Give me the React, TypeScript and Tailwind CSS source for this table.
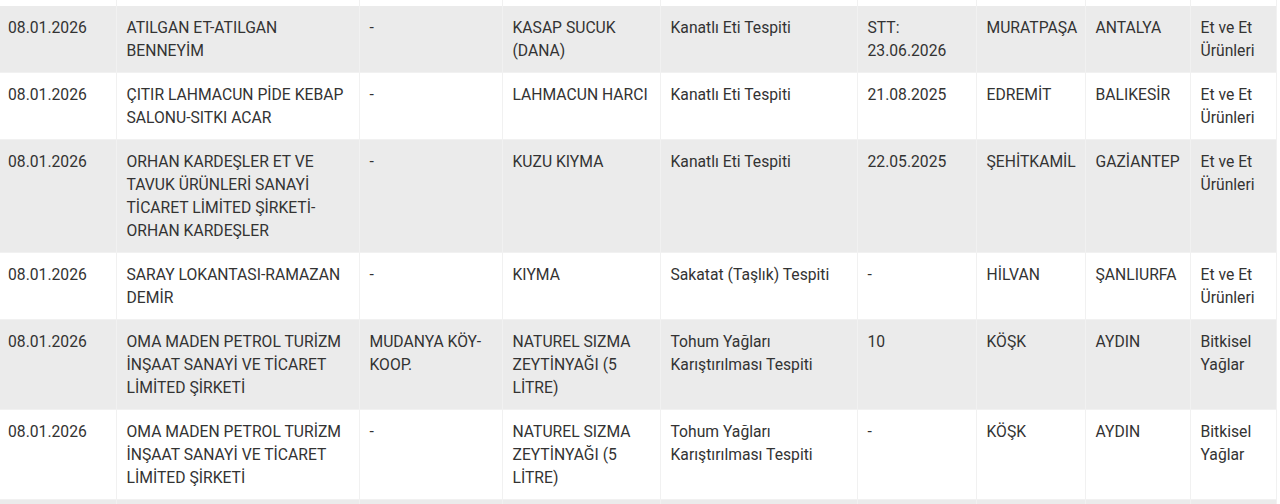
import React from 'react';

// Column widths measured from the reference
const COLS = [116, 243, 143, 158, 197, 119, 109, 105, 86];

type Row = string[];

const ROWS: Row[] = [
    ['08.01.2026', 'ATILGAN ET-ATILGAN BENNEYİM', '-', 'KASAP SUCUK (DANA)', 'Kanatlı Eti Tespiti', 'STT: 23.06.2026', 'MURATPAŞA', 'ANTALYA', 'Et ve Et Ürünleri'],
    ['08.01.2026', 'ÇITIR LAHMACUN PİDE KEBAP SALONU-SITKI ACAR', '-', 'LAHMACUN HARCI', 'Kanatlı Eti Tespiti', '21.08.2025', 'EDREMİT', 'BALIKESİR', 'Et ve Et Ürünleri'],
    ['08.01.2026', 'ORHAN KARDEŞLER ET VE TAVUK ÜRÜNLERİ SANAYİ TİCARET LİMİTED ŞİRKETİ-ORHAN KARDEŞLER', '-', 'KUZU KIYMA', 'Kanatlı Eti Tespiti', '22.05.2025', 'ŞEHİTKAMİL', 'GAZİANTEP', 'Et ve Et Ürünleri'],
    ['08.01.2026', 'SARAY LOKANTASI-RAMAZAN DEMİR', '-', 'KIYMA', 'Sakatat (Taşlık) Tespiti', '-', 'HİLVAN', 'ŞANLIURFA', 'Et ve Et Ürünleri'],
    ['08.01.2026', 'OMA MADEN PETROL TURİZM İNŞAAT SANAYİ VE TİCARET LİMİTED ŞİRKETİ', 'MUDANYA KÖY-KOOP.', 'NATUREL SIZMA ZEYTİNYAĞI (5 LİTRE)', 'Tohum Yağları Karıştırılması Tespiti', '10', 'KÖŞK', 'AYDIN', 'Bitkisel Yağlar'],
    ['08.01.2026', 'OMA MADEN PETROL TURİZM İNŞAAT SANAYİ VE TİCARET LİMİTED ŞİRKETİ', '-', 'NATUREL SIZMA ZEYTİNYAĞI (5 LİTRE)', 'Tohum Yağları Karıştırılması Tespiti', '-', 'KÖŞK', 'AYDIN', 'Bitkisel Yağlar'],
];

function Cell({ text, first }: { text: string; first: boolean }) {
    return (
        <td
            className={`align-top pt-[10px] pb-[10px] pr-[6px] border-r border-[#f1f1f1] break-words ${first ? 'pl-2' : 'pl-[10px]'}`}
        >
            {text}
        </td>
    );
}

export default function App() {
    return (
        <div className="w-[1280px] h-[504px] overflow-hidden bg-white font-['Roboto',sans-serif] text-[15.7px] leading-[23px] text-[#333]">
            <table className="table-fixed border-collapse w-[1276px]">
                <colgroup>
                    {COLS.map((w, i) => (
                        <col key={i} style={{ width: w }} />
                    ))}
                </colgroup>
                <tbody>
                    {/* Partial row cut off at the top */}
                    <tr className="h-[6px] bg-white">
                        {COLS.map((_, i) => (
                            <td key={i} className="border-r border-[#f1f1f1] p-0" />
                        ))}
                    </tr>
                    {ROWS.map((row, r) => (
                        <tr
                            key={r}
                            className={`border-b border-[#f1f1f1] ${r % 2 === 0 ? 'bg-[#ebebeb]' : 'bg-white'}`}
                        >
                            {row.map((c, i) => (
                                <Cell key={i} text={c} first={i === 0} />
                            ))}
                        </tr>
                    ))}
                    {/* Partial row cut off at the bottom */}
                    <tr className="h-[20px] bg-[#ebebeb]">
                        {COLS.map((_, i) => (
                            <td key={i} className="border-r border-[#f1f1f1] p-0" />
                        ))}
                    </tr>
                </tbody>
            </table>
        </div>
    );
}
